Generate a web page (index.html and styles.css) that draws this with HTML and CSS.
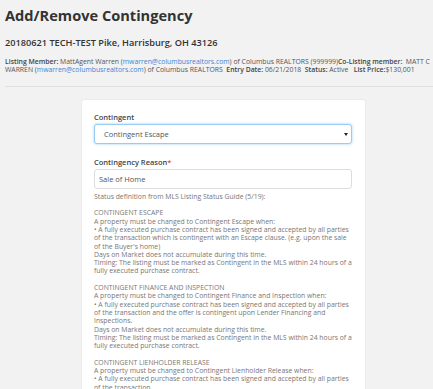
FILE: index.html
```html
<!DOCTYPE html>
<html lang="en">
<head>
  <meta charset="UTF-8" />
  <title>Add/Remove Contingency</title>
  <link rel="stylesheet" href="styles.css">
</head>
<body>
  <div class="page">
    <h1 class="page-title">Add/Remove Contingency</h1>
    <h2 class="address">20180621 TECH-TEST Pike, Harrisburg, OH 43126</h2>
    <p class="listing-info">
      <b>Listing Member:</b> MattAgent Warren (<a href="#">mwarren@columbusrealtors.com</a>) of Columbus REALTORS (999999)<b>Co-Listing member:</b>&nbsp; MATT C WARREN (<a href="#">mwarren@columbusrealtors.com</a>) of Columbus REALTORS&nbsp; <b>Entry Date:</b> 06/21/2018&nbsp; <b>Status:</b> Active&nbsp;&nbsp; <b>List Price:</b>$130,001
    </p>
    <hr class="divider">

    <div class="card">
      <label class="field-label">Contingent</label>
      <div class="select-wrap">
        <select class="field-select">
          <option>Contingent Escape</option>
        </select>
      </div>

      <label class="field-label reason-label">Contingency Reason<span class="req">*</span></label>
      <input class="field-input" type="text" value="Sale of Home">

      <div class="status-guide">
        <p>Status definition from MLS Listing Status Guide (5/19):</p>
        <p>CONTINGENT ESCAPE<br>
        A property must be changed to Contingent Escape when:<br>
        &bull; A fully executed purchase contract has been signed and accepted by all parties of the transaction which is contingent with an Escape clause. (e.g. upon the sale of the Buyer's home)<br>
        Days on Market does not accumulate during this time.<br>
        Timing: The listing must be marked as Contingent in the MLS within 24 hours of a fully executed purchase contract.</p>
        <p>CONTINGENT FINANCE AND INSPECTION<br>
        A property must be changed to Contingent Finance and Inspection when:<br>
        &bull; A fully executed purchase contract has been signed and accepted by all parties of the transaction and the offer is contingent upon Lender Financing and Inspections.<br>
        Days on Market does not accumulate during this time.<br>
        Timing: The listing must be marked as Contingent in the MLS within 24 hours of a fully executed purchase contract.</p>
        <p>CONTINGENT LIENHOLDER RELEASE<br>
        A property must be changed to Contingent Lienholder Release when:<br>
        &bull; A fully executed purchase contract has been signed and accepted by all parties of the transaction.<br>
        Days on Market does not accumulate during this time.</p>
      </div>
    </div>
  </div>
</body>
</html>
```

FILE: styles.css
```css
* {
  box-sizing: border-box;
}
body {
  margin: 0;
  background: #f2f2f2;
  color: #333;
  font-family: 'Open Sans', sans-serif;
  overflow: hidden;
}
.page {
  padding: 5px 0 0 5px;
}
.page-title {
  margin: 0;
  font-size: 14.6px;
  line-height: 20px;
  font-weight: 700;
  color: #333;
}
.address {
  margin: 12px 0 0;
  font-size: 9.2px;
  line-height: 12px;
  font-weight: 600;
  color: #333;
}
.listing-info {
  margin: 9px 0 0;
  font-size: 6.85px;
  line-height: 8.4px;
  color: #555;
}
.listing-info b {
  font-weight: 600;
  color: #444;
}
.listing-info a {
  color: #3a87d6;
  text-decoration: none;
}
.divider {
  margin: 11px 0 0;
  border: none;
  border-top: 1px solid #e0e0e0;
}
.card {
  margin: 12px 0 0 76px;
  width: 285px;
  height: 300px;
  padding: 12px 13px 0 12px;
  background: #fff;
  border: 1px solid #ebebeb;
  border-radius: 3px;
}
.field-label {
  display: block;
  font-size: 7.5px;
  line-height: 10px;
  font-weight: 600;
  color: #444;
  margin-bottom: 2px;
}
.reason-label {
  margin-top: 13px;
}
.req {
  color: #d9534f;
}
.select-wrap {
  position: relative;
}
.select-wrap::after {
  content: '';
  position: absolute;
  right: 4px;
  top: 9px;
  border-left: 2px solid transparent;
  border-right: 2px solid transparent;
  border-top: 3px solid #222;
}
.field-select, .field-input {
  display: block;
  width: 100%;
  height: 20px;
  font-family: 'Open Sans', sans-serif;
  font-size: 7.5px;
  color: #555;
  background: #fff;
  border-radius: 3px;
  outline: none;
}
.field-select {
  appearance: none;
  -webkit-appearance: none;
  padding: 0 0 0 9px;
  border: 1px solid #9ccbf0;
  box-shadow: 0 0 3px rgba(102, 175, 233, 0.6);
}
.field-input {
  padding: 0 0 0 4px;
  border: 1px solid #ddd;
}
.status-guide {
  margin-top: 4px;
  font-size: 6.85px;
  line-height: 8.3px;
  color: #777;
}
.status-guide p {
  margin: 0 0 8.3px;
}
```
